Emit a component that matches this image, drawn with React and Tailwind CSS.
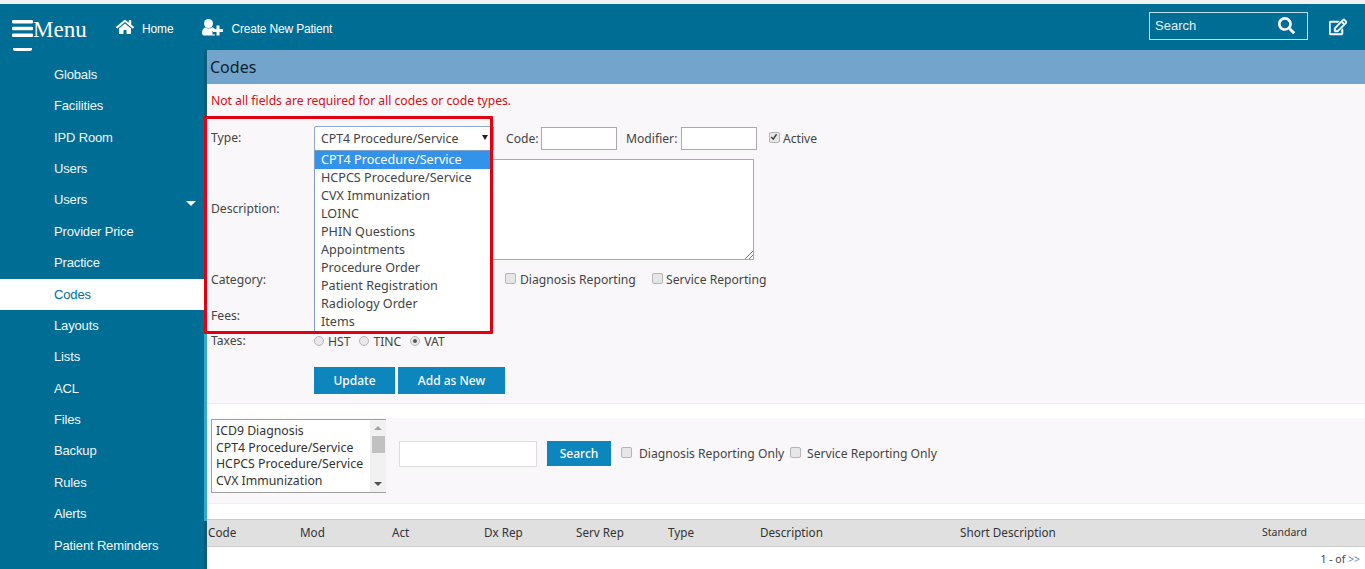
import React from "react";
import { FaHome, FaSearch, FaRegEdit } from "react-icons/fa";

const nav = ["Globals","Facilities","IPD Room","Users","Users","Provider Price","Practice","Codes","Layouts","Lists","ACL","Files","Backup","Rules","Alerts","Patient Reminders"];
const options = ["CPT4 Procedure/Service","HCPCS Procedure/Service","CVX Immunization","LOINC","PHIN Questions","Appointments","Procedure Order","Patient Registration","Radiology Order","Items"];

function Check({ checked, className = "" }) {
  return (
    <span className={`relative inline-block w-[11px] h-[11px] shrink-0 rounded-[2px] border border-[#b5b5b5] bg-[#e6e6e6] ${className}`}>
      {checked && (
        <svg viewBox="0 0 11 11" className="absolute inset-0 w-[9px] h-[9px]">
          <path d="M1.5 5 L4 7.5 L8 1.5" fill="none" stroke="#444" strokeWidth="1.8" />
        </svg>
      )}
    </span>
  );
}

function Radio({ checked }) {
  return (
    <span className="flex items-center justify-center w-[10px] h-[10px] shrink-0 rounded-full border border-[#b5b5b5] bg-[#e9e9e9]">
      {checked && <span className="w-[4px] h-[4px] rounded-full bg-[#555]" />}
    </span>
  );
}

function UserPlus() {
  return (
    <svg width="22" height="17" viewBox="0 0 22 17" className="ml-[29px] shrink-0" fill="#fff">
      <ellipse cx="6.5" cy="4.5" rx="4.5" ry="4.5" />
      <path d="M0 14 C0 10.5 1.5 8.8 3.5 8.2 C5.5 10 8 10 10 8.2 C11.5 8.6 12.5 9.3 13 10.2 L13 12 L10.5 12 L10.5 15.5 L13 15.5 L13 16.5 L2 16.5 C0.8 16.5 0 15.5 0 14 Z" />
      <path d="M14.5 6.5 H17.5 V10 H21 V13 H17.5 V16.5 H14.5 V13 H11 V10 H14.5 Z" />
    </svg>
  );
}

export default function App() {
  return (
    <div className="relative h-[569px] w-[1365px] overflow-hidden bg-white text-[12.15px] text-[#444] font-['Noto_Sans',sans-serif]">
      <div className="h-[4px] bg-[#f1f1f1]" />
      <header className="h-[46px] bg-[#006d94] flex items-center text-white font-['Liberation_Sans',sans-serif]">
        <div className="flex items-center ml-[12px] w-[104px]">
          <svg width="21" height="17" viewBox="0 0 21 17" className="mt-[2px]">
            <rect x="0" y="0" width="21" height="3.4" rx="1" fill="#fff" />
            <rect x="0" y="6.8" width="21" height="3.4" rx="1" fill="#fff" />
            <rect x="0" y="13.6" width="21" height="3.4" rx="1" fill="#fff" />
          </svg>
          <span className="font-['Liberation_Serif',serif] text-[23px] leading-none mt-[4px]">Menu</span>
        </div>
        <FaHome className="text-[18px] mt-[0px]" />
        <span className="ml-[8px] text-[12px] tracking-[-0.15px] mt-[3px]">Home</span>
        <UserPlus />
        <span className="ml-[7px] text-[12px] tracking-[-0.18px] mt-[3px]">Create New Patient</span>
        <div className="ml-auto mr-[57px] w-[159px] h-[28px] border border-[#bfe0ea] flex items-center justify-between pl-[5px] pr-[12px] text-[13px] -mt-[3px]">
          <span className="text-[#e4f1f5]">Search</span>
          <FaSearch className="text-[17px]" />
        </div>
        <FaRegEdit stroke="currentColor" strokeWidth="16" className="absolute left-[1329px] top-[18px] text-[18px]" />
      </header>

      <div className="flex h-[519px]">
        <aside className="w-[207px] shrink-0 bg-[#006d94] border-r-[3px] border-[#0c5d7c] relative font-['Liberation_Sans',sans-serif] text-[13px] tracking-[-0.15px] text-[#f2f8fa]">
          <div className="absolute left-[13px] top-[-2px] w-[19px] h-[3px] bg-white rounded-b-[2px]" />
          <div className="absolute -right-[3px] top-[70px] w-[3px] h-[401px] bg-[#38a6cf]" />
          <nav className="pt-[9px]">
            {nav.map((n, i) => (
              <div
                key={i}
                className={`relative h-[31.385px] flex items-center pl-[54px] ${n === "Codes" ? "bg-white text-[#00709a]" : ""}`}
              >
                {n}
                {i === 4 && (
                  <span className="absolute left-[186px] top-[16px] w-0 h-0 border-x-[5px] border-x-transparent border-t-[5px] border-t-white" />
                )}
              </div>
            ))}
          </nav>
        </aside>

        <main className="flex-1 min-w-0">
          <div className="h-[34px] bg-[#73a4cc] pl-[3px] flex items-center text-[16px] text-[#10222e]">Codes</div>

          <section className="h-[320px] bg-[#f9f7f9] border-b border-[#eeeeee] pl-[4px]">
            <p className="pt-[8px] text-[#d40f14] leading-[17px]">Not all fields are required for all codes or code types.</p>

            <div className="flex items-center mt-[17px] h-[25px]">
              <span className="w-[103px] -mt-[1px]">Type:</span>
              <div className="w-[180px] h-[25px] border border-[#8fa9cf] rounded-[2px] bg-white flex items-center pl-[6px] pt-[2px] text-[12.3px]">CPT4 Procedure/Service</div>
              <span className="ml-[12px] w-[35px] pt-[1px]">Code:</span>
              <span className="w-[76px] h-[23px] bg-white border border-[#a9a9a9]" />
              <span className="ml-[9px] w-[55px] pt-[1px]">Modifier:</span>
              <span className="w-[76px] h-[23px] bg-white border border-[#a9a9a9]" />
              <Check checked className="ml-[12px] -mt-[2px]" />
              <span className="ml-[3px] pt-[1px]">Active</span>
            </div>

            <div className="flex items-center mt-[8px] h-[101px]">
              <span className="w-[103px] mt-[-1px]">Description:</span>
              <span className="relative w-[440px] h-[101px] bg-white border border-[#a9a9a9]">
                <svg viewBox="0 0 9 9" className="absolute right-0 bottom-0 w-[9px] h-[9px]">
                  <path d="M1 9 L9 1 M5 9 L9 5" stroke="#777" strokeWidth="1" />
                </svg>
              </span>
            </div>

            <div className="flex items-center mt-[10px] h-[18px] pt-[2px]">
              <span className="w-[294px]">Category:</span>
              <Check className="-mt-[3px]" />
              <span className="ml-[4px] w-[115px] whitespace-nowrap">Diagnosis Reporting</span>
              <Check className="ml-[17px] -mt-[3px]" />
              <span className="ml-[3px] whitespace-nowrap">Service Reporting</span>
            </div>

            <div className="h-[18px] mt-[18px] pt-[2px] flex items-center">Fees:</div>

            <div className="flex items-center h-[18px] mt-[8px]">
              <span className="w-[103px]">Taxes:</span>
              <Radio />
              <span className="ml-[4px] mt-[2px]">HST</span>
              <span className="ml-[9px]"><Radio /></span>
              <span className="ml-[4px] mt-[2px]">TINC</span>
              <span className="ml-[9px]"><Radio checked /></span>
              <span className="ml-[4px] mt-[2px]">VAT</span>
            </div>

            <div className="flex ml-[103px] mt-[17px] gap-[3px] font-medium text-white text-[12px]">
              <span className="w-[81px] h-[27px] bg-[#0d85bd] flex items-center justify-center">Update</span>
              <span className="w-[107px] h-[27px] bg-[#0d85bd] flex items-center justify-center">Add as New</span>
            </div>
          </section>

          <div className="h-[14px]" />

          <section className="h-[86px] bg-[#f9f7f9] border-b border-[#eeeeee] pl-[4px] flex items-start text-[#333]">
            <div className="w-[175px] h-[74px] flex border-l border-y border-[#a0a0a0] bg-white mt-[1px]">
              <div className="flex-1 pl-[4px] pt-[3px] leading-[16.6px] whitespace-nowrap text-[12.3px]">
                <div>ICD9 Diagnosis</div>
                <div>CPT4 Procedure/Service</div>
                <div>HCPCS Procedure/Service</div>
                <div>CVX Immunization</div>
              </div>
              <div className="w-[16px] bg-[#f1f1f1] relative flex flex-col items-center justify-between py-[6px]">
                <span className="w-0 h-0 border-x-[4px] border-x-transparent border-b-[4px] border-b-[#a3a3a3]" />
                <span className="absolute top-[16px] left-[2px] w-[13px] h-[17px] bg-[#c1c1c1]" />
                <span className="w-0 h-0 border-x-[4px] border-x-transparent border-t-[4px] border-t-[#505050]" />
              </div>
            </div>
            <span className="ml-[13px] mt-[23px] w-[138px] h-[26px] bg-white border border-[#dddddd]" />
            <span className="ml-[10px] mt-[23px] w-[64px] h-[25px] bg-[#0d85bd] text-white font-medium text-[12px] pt-[1px] flex items-center justify-center">Search</span>
            <div className="flex items-center mt-[28px] h-[17px] ml-[10px] text-[#444]">
              <Check className="-mt-[4px]" />
              <span className="ml-[7px] w-[145px] whitespace-nowrap">Diagnosis Reporting Only</span>
              <Check className="ml-[6px] -mt-[4px]" />
              <span className="ml-[6px] whitespace-nowrap">Service Reporting Only</span>
            </div>
          </section>

          <div className="h-[15px]" />

          <div className="h-[28px] bg-[#e0e0e0] border-y border-[#cccccc] flex items-center text-[11.7px] text-[#333]">
            <span className="w-[93px] pl-px">Code</span>
            <span className="w-[92px]">Mod</span>
            <span className="w-[92px]">Act</span>
            <span className="w-[92px]">Dx Rep</span>
            <span className="w-[92px]">Serv Rep</span>
            <span className="w-[92px]">Type</span>
            <span className="w-[200px]">Description</span>
            <span className="w-[302px]">Short Description</span>
            <span className="text-[10.5px]">Standard</span>
          </div>
          <div className="flex justify-end pr-[5px] pt-[3px] text-[10.5px] text-[#444] leading-[18px]">
            1 - of&nbsp;<span className="text-[#5b83b5]">&gt;&gt;</span>
          </div>
        </main>
      </div>

      {/* open select list */}
      <div className="absolute left-[314px] top-[150px] w-[177px] h-[183px] bg-white border border-[#7f9dc9] text-[12.6px] text-[#444] leading-[17px]">
        {options.map((o, i) => (
          <div key={o} className={`h-[18px] pl-[6px] whitespace-nowrap ${i === 0 ? "bg-[#3393ea] text-white" : ""}`}>{o}</div>
        ))}
      </div>
      {/* red annotation */}
      <div className="absolute left-[204px] top-[116px] w-[289px] h-[218px] border-[3px] border-[#e0000f] rounded-[1px] pointer-events-none" />
      <div className="absolute left-[482px] top-[135px] w-0 h-0 border-x-[3px] border-x-transparent border-t-[5px] border-t-[#222]" />
    </div>
  );
}
